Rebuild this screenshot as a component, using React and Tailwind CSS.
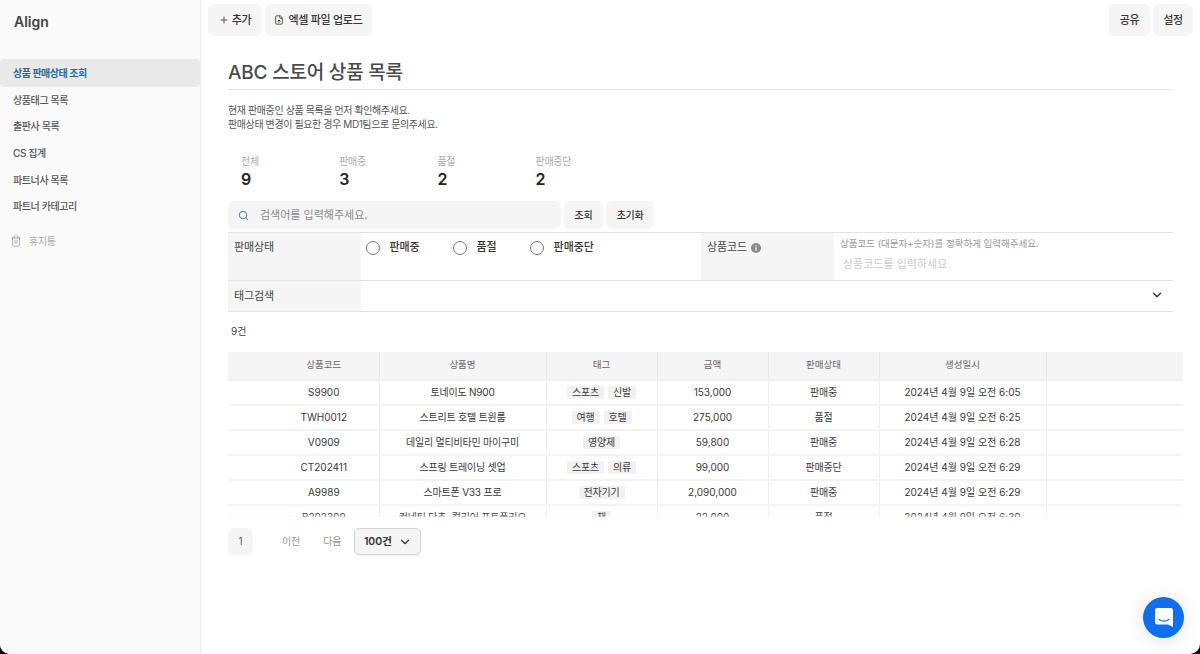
import React from "react";
import { Plus, FileUp, Search, Trash2, ChevronDown } from "lucide-react";

const font = "font-['Inter','Noto_Sans_CJK_KR',sans-serif]";
const nav = ["상품태그 목록", "출판사 목록", "CS 집계", "파트너사 목록", "파트너 카테고리"];
const stats = [["전체", "9"], ["판매중", "3"], ["품절", "2"], ["판매중단", "2"]];
const rows = [
  ["S9900", "토네이도 N900", ["스포츠", "신발"], "153,000", "판매중", "2024년 4월 9일 오전 6:05"],
  ["TWH0012", "스트리트 호텔 트윈룸", ["여행", "호텔"], "275,000", "품절", "2024년 4월 9일 오전 6:25"],
  ["V0909", "데일리 멀티비타민 마이구미", ["영양제"], "59,800", "판매중", "2024년 4월 9일 오전 6:28"],
  ["CT202411", "스프링 트레이닝 셋업", ["스포츠", "의류"], "99,000", "판매중단", "2024년 4월 9일 오전 6:29"],
  ["A9989", "스마트폰 V33 프로", ["전자기기"], "2,090,000", "판매중", "2024년 4월 9일 오전 6:29"],
  ["B202309", "컨네틱 단추, 컬리어 포트폴리오", ["책"], "22,000", "품절", "2024년 4월 9일 오전 6:30"],
];
const headers = ["상품코드", "상품명", "태그", "금액", "판매상태", "생성일시", ""];

function Btn({ children, className = "" }) {
  return (
    <button className={`rounded-[6px] bg-[#f5f5f5] font-medium text-[#37352f] flex items-center justify-center ${className}`}>
      {children}
    </button>
  );
}

function Radio({ label }) {
  return (
    <label className="flex items-center gap-[9.5px] text-[11px] font-medium tracking-[-0.1px] text-[#37352f]">
      <span className="w-[14px] h-[14px] rounded-full border border-[#777] bg-white" />
      {label}
    </label>
  );
}

export default function App() {
  return (
    <div className="h-[654px] w-[1200px] bg-black overflow-hidden">
      <div className={`flex h-[654px] w-[1200px] overflow-hidden rounded-b-[10px] bg-white ${font}`}>
        <aside className="w-[201px] shrink-0 bg-[#fafafa] border-r border-[#ececec] shadow-[1px_0_2px_rgba(0,0,0,0.04)] flex flex-col">
          <div className="h-[59px] pl-[14px] pt-[13px] text-[14px] leading-[18px] font-semibold text-[#444]">Align</div>
          <div className="h-[28px] rounded-[4px] bg-[#e9e9e9] pl-[13px] flex items-center text-[10px] font-semibold tracking-[-0.5px] text-[#1f6c9f]">상품 판매상태 조회</div>
          {nav.map((n) => (
            <div key={n} className="h-[26.6px] pl-[13px] flex items-center text-[10px] font-medium tracking-[-0.4px] text-[#555]">{n}</div>
          ))}
          <div className="mt-[14px] pl-[10px] flex items-center gap-[7px] text-[10px] tracking-[-0.3px] text-[#aaa]">
            <Trash2 size={12} strokeWidth={1.5} className="text-[#999]" />
            휴지통
          </div>
        </aside>

        <main className="flex-1 min-w-0 flex flex-col relative">
          <div className="flex justify-between pl-[7px] pr-[7px] pt-[4px]">
            <div className="flex gap-[3px]">
              <Btn className="h-[32px] w-[54px] gap-[3px] text-[11px] tracking-[-0.3px]"><Plus size={10} strokeWidth={2} />추가</Btn>
              <Btn className="h-[32px] w-[107px] gap-[4px] text-[11px] tracking-[-0.3px]"><FileUp size={10} strokeWidth={2} />엑셀 파일 업로드</Btn>
            </div>
            <div className="flex gap-[3px]">
              <Btn className="h-[32px] w-[41px] text-[11px] tracking-[-0.3px]">공유</Btn>
              <Btn className="h-[32px] w-[40px] text-[11px] tracking-[-0.3px]">설정</Btn>
            </div>
          </div>

          <div className="pl-[27px] pr-[17px]">
            <div className="mr-[10px] mt-[22px] pb-[1px] border-b border-[#e3e3e3]">
              <h1 className="text-[19px] leading-[30px] font-medium tracking-[-0.2px] text-[#4a4a4a]">ABC 스토어 상품 목록</h1>
            </div>
            <p className="mt-[14px] text-[10px] leading-[13.5px] tracking-[-0.4px] text-[#555]">
              현재 판매중인 상품 목록을 먼저 확인해주세요.<br />
              판매상태 변경이 필요한 경우 MD1팀으로 문의주세요.
            </p>

            <div className="mt-[24px] flex pl-[13px]">
              {stats.map(([k, v]) => (
                <div key={k} className="w-[98.2px]">
                  <div className="text-[10px] leading-[13px] tracking-[-0.3px] text-[#aaa]">{k}</div>
                  <div className="mt-[1px] text-[16px] leading-[21px] font-semibold text-[#222]">{v}</div>
                </div>
              ))}
            </div>

            <div className="mt-[11px] flex gap-[3px]">
              <div className="w-[333px] h-[28px] rounded-[6px] bg-[#f5f5f5] pl-[10px] flex items-center gap-[11px] text-[11px] text-[#8a8a8a]">
                <Search size={11} strokeWidth={2.5} className="text-[#5b8fd6]" />
                검색어를 입력해주세요.
              </div>
              <Btn className="h-[28px] w-[39px] text-[10px] tracking-[-0.3px]">조회</Btn>
              <Btn className="h-[28px] w-[48px] text-[10px] tracking-[-0.3px]">초기화</Btn>
            </div>

            <div className="mr-[10px] mt-[3px] border-t border-[#e3e3e3]">
              <div className="flex h-[48px] border-b border-[#e3e3e3]">
                <div className="w-[133px] bg-[#f5f5f5] pl-[6px] pt-[7px] text-[11px] leading-[15px] tracking-[-0.1px] text-[#444]">판매상태</div>
                <div className="w-[340px] flex items-start gap-[33.5px] pl-[5px] pt-[7px] leading-[15px]">
                  <Radio label="판매중" />
                  <Radio label="품절" />
                  <Radio label="판매중단" />
                </div>
                <div className="w-[133px] bg-[#f5f5f5] pl-[6px] pt-[7px] flex items-start gap-[4px] text-[11px] leading-[15px] tracking-[-0.1px] text-[#444]">
                  상품코드
                  <svg width="10" height="10" viewBox="0 0 10 10" className="mt-[3px]">
                    <circle cx="5" cy="5" r="5" fill="#8a8a8a" />
                    <rect x="4.4" y="4.3" width="1.2" height="3.3" fill="#fff" />
                    <rect x="4.4" y="2.4" width="1.2" height="1.2" fill="#fff" />
                  </svg>
                </div>
                <div className="flex-1 pl-[6px] pt-[4px]">
                  <div className="text-[9.5px] leading-[13px] text-[#999]">상품코드 (대문자+숫자)를 정확하게 입력해주세요.</div>
                  <div className="mt-[7px] pl-[3px] text-[11px] leading-[15px] text-[#ccc]">상품코드를 입력하세요</div>
                </div>
              </div>
              <div className="flex h-[31px] border-b border-[#e3e3e3]">
                <div className="w-[133px] bg-[#f5f5f5] pl-[6px] pt-[8px] text-[11px] leading-[15px] tracking-[-0.1px] text-[#444]">태그검색</div>
                <div className="flex-1 flex justify-end items-center pr-[9px] pb-[2px]">
                  <ChevronDown size={14} strokeWidth={2} className="text-[#222]" />
                </div>
              </div>
            </div>

            <div className="mt-[12px] pl-[3px] text-[10px] leading-[14px] text-[#444]">9건</div>

            <div className="mt-[14px] h-[165px] overflow-hidden relative">
              <table className="w-[956px] table-fixed border-collapse text-[10px] text-[#3a3a3a]">
                <colgroup>
                  <col className="w-[151px]" />
                  <col className="w-[167px]" />
                  <col className="w-[111px]" />
                  <col className="w-[111px]" />
                  <col className="w-[111px]" />
                  <col className="w-[167px]" />
                  <col />
                </colgroup>
                <thead>
                  <tr className="h-[28px] bg-[#f5f5f5] border-b-2 border-[#efefef]">
                    {headers.map((h, i) => (
                      <th key={i} className="font-normal text-[9.5px] text-[#666] border-r border-[#e8e8e8] first:pl-[41px] last:border-r-0">{h}</th>
                    ))}
                  </tr>
                </thead>
                <tbody>
                  {rows.map((r) => (
                    <tr key={r[0]} className="h-[25px] border-b-2 border-[#f3f3f3]">
                      <td className="pl-[41px] text-center border-r border-[#efefef]">{r[0]}</td>
                      <td className="text-center border-r border-[#efefef] tracking-[-0.2px]">{r[1]}</td>
                      <td className="border-r border-[#efefef]">
                        <div className="flex justify-center gap-[4px]">
                          {r[2].map((t) => (
                            <span key={t} className="h-[13px] px-[5px] rounded-[2px] bg-[#f1f1f1] text-[10px] leading-[13px] tracking-[-0.2px]">{t}</span>
                          ))}
                        </div>
                      </td>
                      <td className="text-center border-r border-[#efefef]">{r[3]}</td>
                      <td className="text-center border-r border-[#efefef] tracking-[-0.2px]">{r[4]}</td>
                      <td className="text-center border-r border-[#efefef]">{r[5]}</td>
                      <td />
                    </tr>
                  ))}
                </tbody>
              </table>
              <div className="absolute left-0 right-0 bottom-0 h-[3px] bg-gradient-to-b from-transparent to-[#f4f4f4]/60" />
            </div>

            <div className="mt-[11px] flex items-center">
              <div className="w-[25px] h-[27px] rounded-[6px] bg-[#f5f5f5] flex items-center justify-center text-[10px] text-[#555]">1</div>
              <span className="ml-[29px] text-[10px] tracking-[-0.1px] text-[#999]">이전</span>
              <span className="ml-[23px] text-[10px] tracking-[-0.1px] text-[#999]">다음</span>
              <div className="ml-[13px] w-[67px] h-[27px] rounded-[5px] border border-[#d4d4d4] bg-[#f5f5f5] shadow-[0_1px_1px_rgba(0,0,0,0.05)] flex items-center justify-center gap-[6px] text-[10.5px] font-semibold text-[#333]">
                100건
                <ChevronDown size={14} strokeWidth={2} />
              </div>
            </div>
          </div>

          <div className="absolute right-[16px] bottom-[16px] w-[41px] h-[41px] rounded-full bg-[#0f6fee] shadow-[0_2px_20px_rgba(0,0,0,0.12)] flex items-center justify-center">
            <svg width="20" height="22" viewBox="0 0 20 22">
              <path d="M3 1h14a2 2 0 0 1 2 2v17l-5-2.5H3a2 2 0 0 1-2-2V3a2 2 0 0 1 2-2z" fill="#fff" />
              <path d="M5 12.5c3 2 7 2 10 0" fill="none" stroke="#0f6fee" strokeWidth="1.2" strokeLinecap="round" />
            </svg>
          </div>
        </main>
      </div>
    </div>
  );
}
